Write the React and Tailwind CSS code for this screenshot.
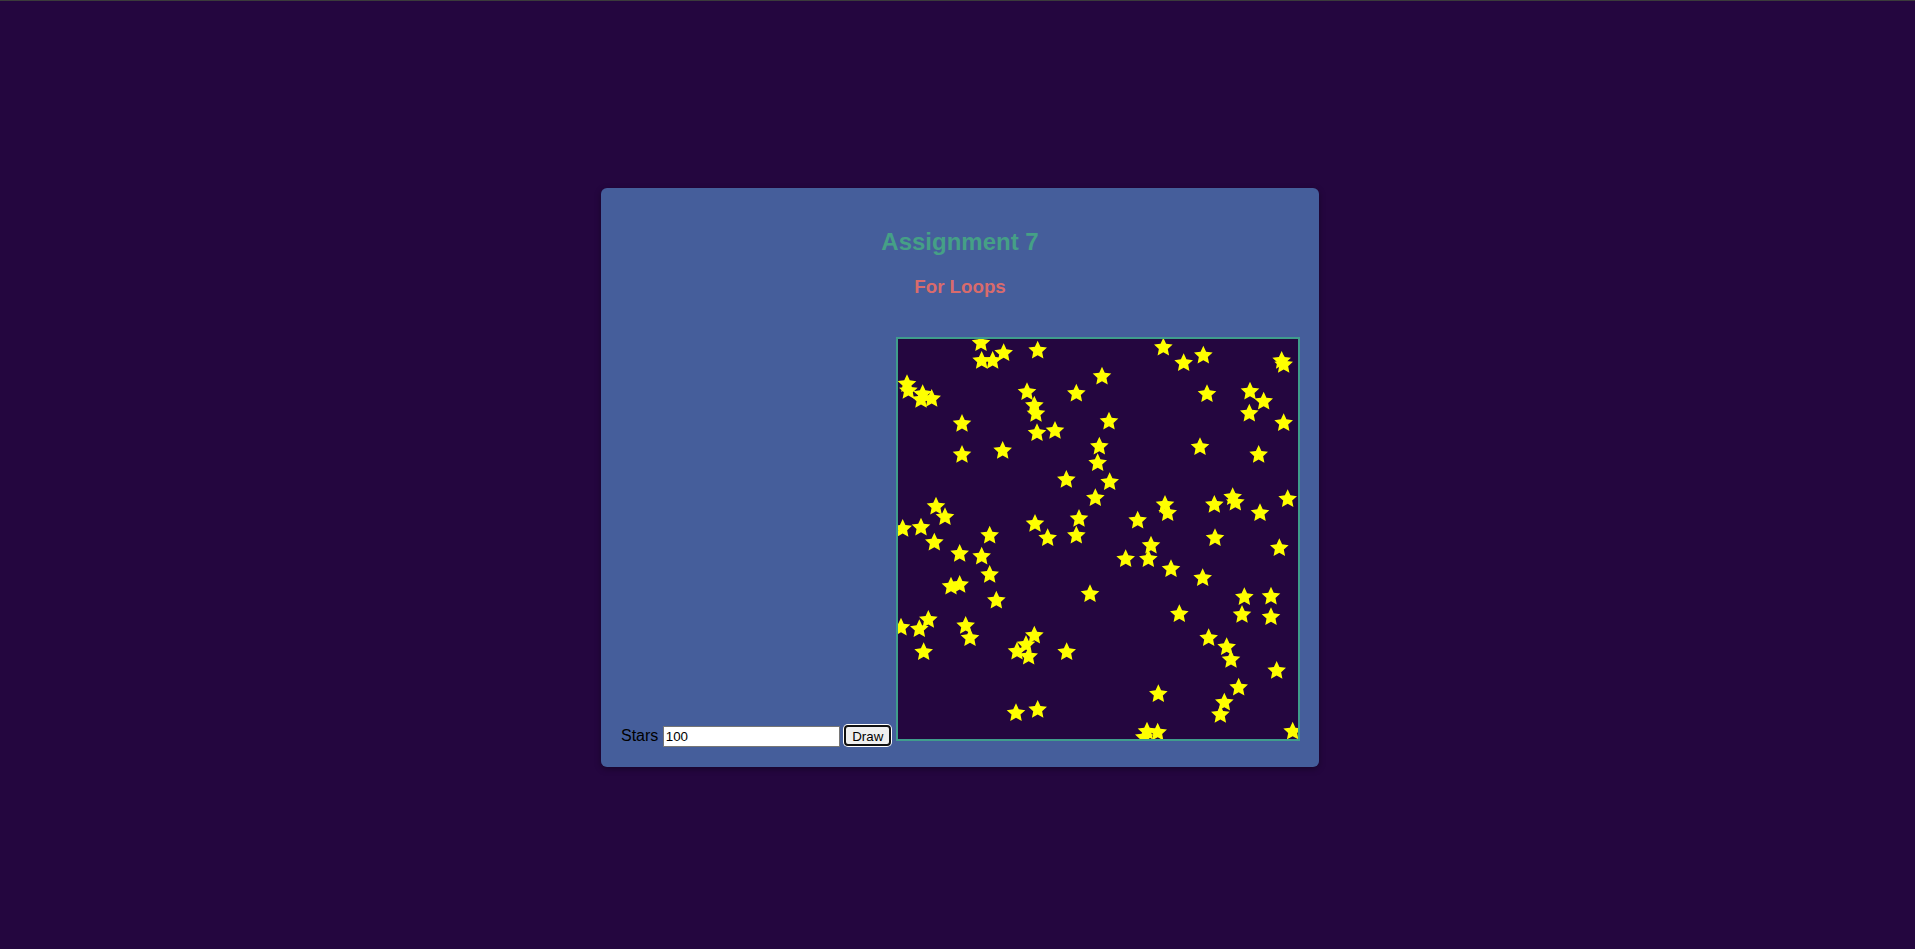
import React from "react";

// star centres read off the reference (3x zoom coords, origin 890,330)
const raw = [
  [270, 35], [272, 88], [305, 88], [338, 65], [440, 57], [817, 48], [878, 95],
  [937, 72], [1172, 88], [1178, 100], [48, 158], [52, 178], [95, 188], [90, 205],
  [122, 202], [633, 135], [408, 182], [556, 186], [948, 188], [1077, 180],
  [1118, 210], [1075, 246], [1178, 275], [430, 222], [435, 247], [213, 277],
  [654, 270], [438, 305], [492, 298], [625, 345], [620, 395], [213, 370],
  [335, 358], [927, 347], [1103, 370], [526, 445], [656, 452], [613, 500],
  [135, 525], [162, 557], [822, 520], [830, 545], [970, 520], [1025, 497],
  [1033, 513], [1190, 503], [1107, 545], [35, 592], [90, 588], [130, 633],
  [296, 612], [432, 577], [470, 620], [564, 562], [556, 612], [740, 567],
  [972, 620], [1165, 650], [206, 667], [272, 675], [296, 730], [780, 642],
  [772, 683], [704, 683], [840, 713], [935, 740], [180, 765], [206, 760],
  [316, 807], [597, 788], [1060, 797], [1140, 795], [1053, 850], [1140, 857],
  [865, 848], [30, 888], [85, 893], [112, 865], [224, 883], [237, 920],
  [430, 912], [405, 940], [378, 960], [413, 975], [527, 962], [98, 962],
  [953, 920], [1007, 947], [1020, 985], [1157, 1018], [1043, 1068], [802, 1088],
  [1000, 1113], [988, 1150], [375, 1145], [440, 1135], [768, 1200], [800, 1203],
  [760, 1218], [1205, 1200],
];

const stars = raw.map(([x, y]) => [x / 3 - 7, y / 3 - 7.5]);

function starPoints(cx, cy, R = 9.8, r = 4.7) {
  const pts = [];
  for (let i = 0; i < 10; i++) {
    const a = (-90 + i * 36) * (Math.PI / 180);
    const rad = i % 2 === 0 ? R : r;
    pts.push(`${(cx + rad * Math.cos(a)).toFixed(2)},${(cy + rad * Math.sin(a)).toFixed(2)}`);
  }
  return pts.join(" ");
}

function StarCanvas() {
  return (
    <svg
      width="400"
      height="400"
      viewBox="0 0 400 400"
      className="inline-block box-content border-2 border-[#3f9d8c] bg-[#24063f] overflow-hidden align-baseline"
    >
      {stars.map(([x, y], i) => (
        <polygon key={i} points={starPoints(x, y)} fill="#ffff00" />
      ))}
    </svg>
  );
}

export default function App() {
  return (
    <div className="min-h-screen bg-[#24063f] border-t border-[#3b3b3b] font-['Liberation_Sans',Arial,sans-serif]">
      <div className="flex justify-center pl-[5px] pt-[187px]">
        <div className="w-[718px] h-[579px] bg-[#455e9b] rounded-[6px] shadow-[0_2px_6px_rgba(0,0,0,0.35)] p-5">
          <h2 className="mt-5 text-center text-[24px] leading-[28px] font-bold text-[#45a086]">
            Assignment 7
          </h2>
          <h3 className="mt-5 text-center text-[18.72px] leading-[21px] font-bold text-[#d96b6c]">
            For Loops
          </h3>
          <div className="mt-[40px] text-[16px] leading-normal text-black whitespace-nowrap">
            <span>Stars</span>{" "}
            <input
              type="text"
              defaultValue="100"
              className="inline-block w-[177px] h-[21px] px-[2px] py-[1px] bg-white border border-[#767676] text-[13.33px] text-black align-baseline"
            />{" "}
            <button className="inline-block w-[47px] h-[21px] bg-[#efefef] border-2 border-[#101010] rounded-[4px] ring-1 ring-white text-[13.33px] text-black align-baseline">
              Draw
            </button>{" "}
            <StarCanvas />
          </div>
        </div>
      </div>
    </div>
  );
}
